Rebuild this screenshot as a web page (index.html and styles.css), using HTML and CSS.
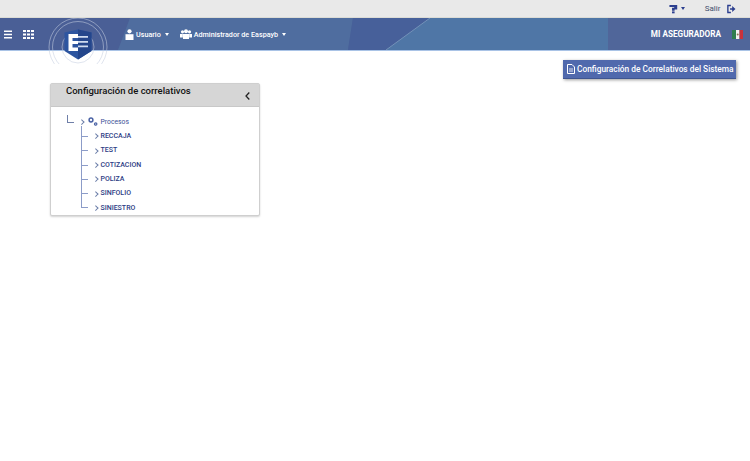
FILE: index.html
```html
<!DOCTYPE html>
<html lang="es">
<head>
<meta charset="utf-8">
<title>Configuración de correlativos</title>
<link rel="stylesheet" href="styles.css">
</head>
<body>
<div class="topbar">
  <svg class="help" width="10" height="10" viewBox="0 0 10 10"><path d="M0.500 0.500H9.500V5.500H6.500V7H3.500V3.500H6V2.800H0.500Z" fill="#2c3f8f"/><rect x="3.500" y="7.800" width="3" height="2.200" fill="#2c3f8f"/></svg>
  <span class="caret dark"></span>
  <span class="salir">Salir</span>
  <svg class="exit" width="10" height="10" viewBox="0 0 10 10"><path d="M4.500 1H1V9H4.500" fill="none" stroke="#2c3f8f" stroke-width="1.600"/><path d="M3.500 4H6V1.600L9.800 5L6 8.400V6H3.500Z" fill="#2c3f8f"/></svg>
</div>
<header class="navbar">
  <svg class="deco" width="750" height="32" viewBox="0 0 750 32" preserveAspectRatio="none">
    <polygon points="0,0 130,0 118,32 0,32" fill="#4a5f96"/>
    <polygon points="130,0 353,0 348,32 118,32" fill="#4f6d9f"/>
    <polygon points="353,0 430,0 386,32 348,32" fill="#47609a"/>
    <polygon points="430,0 608,0 608,32 386,32" fill="#4f76a6"/>
    <line x1="430" y1="0" x2="386" y2="32" stroke="#7391b8" stroke-width="1"/>
    <rect x="608" y="0" width="142" height="32" fill="#50669a"/>
  </svg>
  <div class="nav-left">
    <svg class="ico-menu" width="8" height="9" viewBox="0 0 8 9"><path d="M0 0.500H8V2H0ZM0 3.700H8V5.200H0ZM0 7H8V8.500H0Z" fill="#fff"/></svg>
    <svg class="ico-grid" width="11" height="9" viewBox="0 0 11 9"><path d="M0 0h3v2H0zM4 0h3v2H4zM8 0h3v2H8zM0 3.500h3v2H0zM4 3.500h3v2H4zM8 3.500h3v2H8zM0 7h3v2H0zM4 7h3v2H4zM8 7h3v2H8z" fill="#fff"/></svg>
    <div class="logo">
      <svg width="62" height="46" viewBox="0 0 62 46">
        <g fill="none" stroke="#c4cde0" stroke-opacity="0.55">
          <circle cx="31" cy="29" r="29" stroke-width="1"/>
          <circle cx="31" cy="29" r="25.500" stroke-width="1"/>
          <circle cx="31" cy="29" r="16" stroke-width="1"/>
        </g>
        <path d="M17.500 14.500L31 11.500L44.500 14.500V33L31 41.500L17.500 33Z" fill="#2d55a0"/>
        <path d="M31 11.500L44.500 14.500V33L31 41.500Z" fill="#24468c"/>
        <path d="M21.500 16H31V20H25.500V23H31V26H25.500V29.500H31V33H21.500Z" fill="#fff"/>
        <path d="M31 18H41V19.800H31ZM31 23H41V24.800H31ZM31 27.500H41V29.300H31Z" fill="#cfdcf0"/>
      </svg>
    </div>
    <div class="nav-item usuario">
      <svg width="9" height="11" viewBox="0 0 9 11"><circle cx="4.500" cy="2.300" r="2.100" fill="#fff"/><path d="M0.500 5.200H8.500V11H0.500Z" fill="#fff"/></svg>
      <span>Usuario</span><span class="caret"></span>
    </div>
    <div class="nav-item admin">
      <svg width="12" height="10" viewBox="0 0 12 10"><circle cx="2.500" cy="2.800" r="1.600" fill="#fff"/><circle cx="9.500" cy="2.800" r="1.600" fill="#fff"/><circle cx="6" cy="2.200" r="2" fill="#fff"/><path d="M0 5H2.800V8.500H0ZM9.200 5H12V8.500H9.200Z" fill="#fff"/><path d="M3 5H9V10H3Z" fill="#fff"/></svg>
      <span>Administrador de Easpayb</span><span class="caret"></span>
    </div>
  </div>
  <div class="nav-right">
    <span class="company">MI ASEGURADORA</span>
    <svg class="flag" width="11" height="9" viewBox="0 0 11 9"><rect width="4" height="9" fill="#2f7d4f"/><rect x="4" width="3.500" height="9" fill="#f2f2f2"/><rect x="7.500" width="3.500" height="9" fill="#c8323c"/><circle cx="5.700" cy="4.500" r="1" fill="#8a7a50"/></svg>
  </div>
</header>
<main class="content">
  <div class="actions">
    <button class="btn" type="button">
      <svg width="8" height="10" viewBox="0 0 8 10"><path d="M0.500 0.500H5L7.500 3V9.500H0.500Z" fill="none" stroke="#fff"/><path d="M2 5H6M2 7H6" stroke="#fff" stroke-width="0.800"/></svg>
      <span>Configuración de Correlativos del Sistema</span>
    </button>
  </div>
  <section class="panel">
    <div class="panel-head">
      <h2>Configuración de correlativos</h2>
      <svg class="collapse" width="5" height="8" viewBox="0 0 5 8"><path d="M4.300 0.500L1 4L4.300 7.500" fill="none" stroke="#222" stroke-width="1.300"/></svg>
    </div>
    <div class="tree">
      <div class="root">
        <span class="elbow"></span>
        <span class="chev"></span>
        <svg class="gears" width="10" height="9" viewBox="0 0 10 9"><circle cx="3" cy="3" r="1.900" fill="none" stroke="#4a62a5" stroke-width="1.500"/><circle cx="7.700" cy="7" r="1.200" fill="none" stroke="#4a62a5" stroke-width="1.200"/></svg>
        <span class="root-label">Procesos</span>
      </div>
      <ul class="children">
        <li><span class="chev"></span>RECCAJA</li>
        <li><span class="chev"></span>TEST</li>
        <li><span class="chev"></span>COTIZACION</li>
        <li><span class="chev"></span>POLIZA</li>
        <li><span class="chev"></span>SINFOLIO</li>
        <li><span class="chev"></span>SINIESTRO</li>
      </ul>
    </div>
  </section>
</main>
</body>
</html>
```
FILE: styles.css
```css
* { box-sizing: border-box; }
html, body { margin: 0; padding: 0; }
body {
  width: 750px;
  height: 461px;
  overflow: hidden;
  background: #fff;
  font-family: Roboto, "Liberation Sans", sans-serif;
}
.topbar {
  height: 18px;
  background: #e9e9e9;
  border-bottom: 1px solid #dcdcd6;
  display: flex;
  align-items: center;
  padding: 0 14px 0 669px;
}
.help { margin-right: 3px; }
.salir { margin-left: 20px; margin-right: 7px; font-size: 8px; color: #44506e; }
.caret {
  width: 0;
  height: 0;
  margin-left: 4px;
  border-left: 2.500px solid transparent;
  border-right: 2.500px solid transparent;
  border-top: 3px solid #fff;
}
.caret.dark { border-top-color: #2c3f8f; margin-left: 0; }
.navbar {
  position: relative;
  height: 33px;
  background: #4d6398;
  border-bottom: 1px solid #a9c3e6;
  display: flex;
  justify-content: space-between;
  align-items: center;
  color: #fff;
}
.deco { position: absolute; left: 0; top: 0; }
.nav-left, .nav-right { position: relative; display: flex; align-items: center; }
.nav-left { padding-left: 4px; }
.ico-grid { margin-left: 11px; }
.logo { position: relative; width: 62px; height: 32px; margin-left: 13px; }
.logo svg { position: absolute; left: 0; top: 0; }
.nav-item { display: flex; align-items: center; font-size: 7.200px; font-weight: 500; }
.nav-item svg { margin-right: 2px; flex-shrink: 0; }
.usuario { margin-left: 16px; }
.admin { margin-left: 11px; }
.nav-right { padding-right: 7px; }
.company { font-size: 8.200px; font-weight: 700; margin-right: 11px; }
.content { position: relative; padding: 9px 14px 0 50px; }
.actions { display: flex; justify-content: flex-end; }
.btn {
  width: 173px;
  height: 19px;
  padding: 0 0 0 4px;
  display: flex;
  align-items: center;
  gap: 2px;
  background: #5069ad;
  color: #fff;
  border: 0;
  border-bottom: 1px solid #3f5590;
  box-shadow: 1px 1px 3px rgba(0, 0, 0, 0.4);
  font-family: inherit;
  font-size: 8.350px;
  font-weight: 500;
  white-space: nowrap;
}
.btn svg { flex-shrink: 0; }
.panel {
  width: 210px;
  height: 133px;
  margin-top: 4px;
  border: 1px solid #cfcfcf;
  border-radius: 2px;
  box-shadow: 0 1px 2px rgba(0, 0, 0, 0.18);
  background: #fff;
}
.panel-head {
  height: 23px;
  background: #d6d6d6;
  border-bottom: 1px solid #c8c8c8;
  display: flex;
  justify-content: space-between;
  align-items: flex-start;
  padding: 0 9px 0 15px;
}
.panel-head h2 {
  margin: 0;
  padding-top: 1px;
  font-size: 9.500px;
  font-weight: 500;
  line-height: 12px;
  color: #111;
}
.collapse { margin-top: 8px; }
.tree { position: relative; padding: 8px 0 0 16px; }
.root { display: flex; align-items: center; height: 14px; }
.elbow {
  width: 7px;
  height: 8px;
  margin-top: -6px;
  border-left: 1px solid #6f7fa8;
  border-bottom: 1px solid #6f7fa8;
}
.chev {
  display: inline-block;
  width: 3.500px;
  height: 3.500px;
  border-top: 1px solid #6a7da8;
  border-right: 1px solid #6a7da8;
  transform: rotate(45deg);
}
.root .chev { margin-left: 5.500px; }
.gears { margin-left: 5px; margin-top: -2px; flex-shrink: 0; }
.root-label { margin-left: 2.500px; font-size: 6.800px; color: #3b4f95; }
.children {
  position: relative;
  list-style: none;
  margin: 0 0 0 14px;
  padding: 0;
  font-size: 7px;
  font-weight: 500;
  color: #2c3c84;
}
.children::before {
  content: "";
  position: absolute;
  left: 0;
  top: -3px;
  bottom: 7px;
  width: 1px;
  background: #8c9cc8;
}
.children li {
  position: relative;
  height: 14.300px;
  display: flex;
  align-items: center;
  padding-left: 13px;
  line-height: 14px;
}
.children li::before {
  content: "";
  position: absolute;
  left: 0;
  top: 7px;
  width: 7px;
  height: 1px;
  background: #8c9cc8;
}
.children .chev { margin-right: 3px; }
```
